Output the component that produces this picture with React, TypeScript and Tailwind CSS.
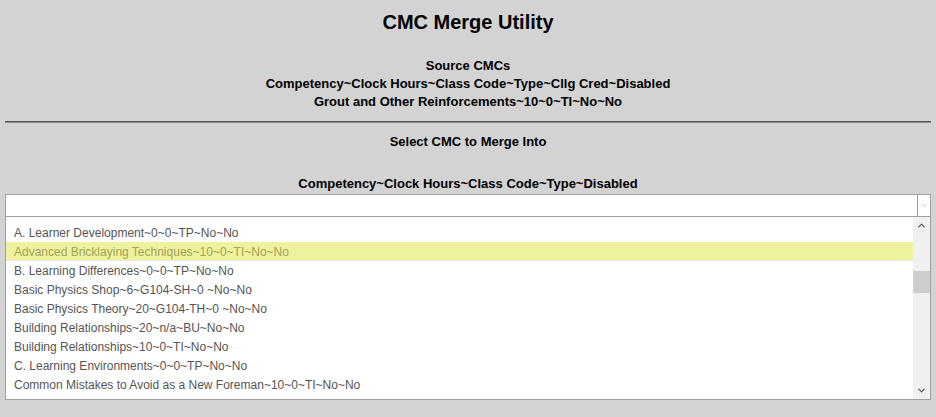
import { ChevronDown, ChevronUp } from "lucide-react";

const rows = [
  "A. Learner Development~0~0~TP~No~No",
  "Advanced Bricklaying Techniques~10~0~TI~No~No",
  "B. Learning Differences~0~0~TP~No~No",
  "Basic Physics Shop~6~G104-SH~0 ~No~No",
  "Basic Physics Theory~20~G104-TH~0 ~No~No",
  "Building Relationships~20~n/a~BU~No~No",
  "Building Relationships~10~0~TI~No~No",
  "C. Learning Environments~0~0~TP~No~No",
  "Common Mistakes to Avoid as a New Foreman~10~0~TI~No~No",
];

const font = { fontFamily: '"Century Gothic", "Liberation Sans", Arial, sans-serif' };

export default function App() {
  return (
    <div className="min-h-[417px] bg-[#d3d3d3] px-[5px] text-black" style={font}>
      {/* Title */}
      <h1 className="pt-[10px] text-center text-[20px] font-bold leading-[24px]">CMC Merge Utility</h1>

      {/* Source block */}
      <div className="mt-[23px] text-center text-[13px] font-bold leading-[18px]">
        <p>Source CMCs</p>
        <p>Competency~Clock Hours~Class Code~Type~Cllg Cred~Disabled</p>
        <p>Grout and Other Reinforcements~10~0~TI~No~No</p>
      </div>

      <div className="mt-[10px] h-[2px] border-t border-b border-t-[#5a5a5a] border-b-[#8a8a8a]" />

      <p className="mt-[10px] text-center text-[13px] font-bold leading-[18px]">Select CMC to Merge Into</p>

      <p className="mt-[24px] text-center text-[13px] font-bold leading-[18px]">
        Competency~Clock Hours~Class Code~Type~Disabled
      </p>

      {/* Select */}
      <div className="mt-[1px] flex h-[23px] border border-[#a0a0a0] bg-white">
        <div className="flex-1" />
        <div className="flex w-[13px] items-center justify-center border-l border-[#a0a0a0]">
          <ChevronDown className="size-[9px] text-[#9a9a9a]" strokeWidth={1.5} />
        </div>
      </div>

      {/* Listbox */}
      <div className="flex h-[183px] border border-t-0 border-[#a0a0a0] bg-white">
        <div className="flex-1 overflow-hidden">
          <div className="h-[6px]" />
          {rows.map((r, i) => (
            <div
              key={r + i}
              className={
                i === 1
                  ? "h-[19px] border-b border-[#e6e6e6] bg-[#eef29c] pl-[8px] text-[12px] leading-[21px] text-[#a3a35c]"
                  : "h-[19px] pl-[8px] text-[12px] leading-[20px] text-[#555555]"
              }
            >
              {r}
            </div>
          ))}
        </div>
        <div className="flex w-[17px] flex-col bg-[#f0f0f0]">
          <div className="flex h-[17px] items-center justify-center">
            <ChevronUp className="size-[11px] text-[#606060]" strokeWidth={3} />
          </div>
          <div className="mt-[37px] h-[22px] bg-[#cdcdcd]" />
          <div className="flex-1" />
          <div className="flex h-[17px] items-center justify-center">
            <ChevronDown className="size-[11px] text-[#606060]" strokeWidth={3} />
          </div>
        </div>
      </div>
    </div>
  );
}
